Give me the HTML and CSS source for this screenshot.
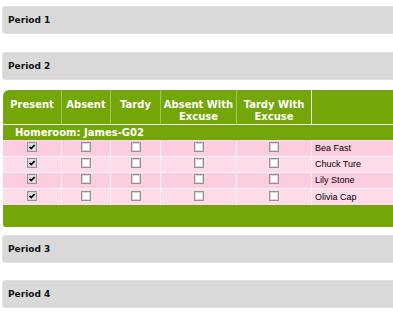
FILE: index.html
```html
<!DOCTYPE html>
<html lang="en">
<head>
  <meta charset="UTF-8">
  <meta name="viewport" content="width=device-width, initial-scale=1.0">
  <title>Attendance</title>
  <link rel="stylesheet" href="styles.css">
</head>
<body>

<div class="page">

  <div class="period period-1">Period 1</div>

  <div class="period period-2">Period 2</div>

  <!-- Open period: attendance grid -->
  <div class="grid-box">
    <table class="grid">
      <colgroup>
        <col class="c1"><col class="c2"><col class="c3"><col class="c4"><col class="c5"><col>
      </colgroup>
      <thead>
        <tr class="head-row">
          <th>Present</th>
          <th>Absent</th>
          <th>Tardy</th>
          <th>Absent With Excuse</th>
          <th class="last">Tardy With Excuse</th>
          <th class="names-head"></th>
        </tr>
      </thead>
      <tbody>
        <tr class="room-row">
          <td colspan="6">Homeroom: James-G02</td>
        </tr>
        <tr class="odd">
          <td><span class="box checked"><svg viewBox="0 0 8 8"><path d="M1.5 3.8 L3.3 5.6 L6.6 2"/></svg></span></td>
          <td><span class="box"></span></td>
          <td><span class="box"></span></td>
          <td><span class="box"></span></td>
          <td><span class="box"></span></td>
          <td class="name">Bea Fast</td>
        </tr>
        <tr class="even">
          <td><span class="box checked"><svg viewBox="0 0 8 8"><path d="M1.5 3.8 L3.3 5.6 L6.6 2"/></svg></span></td>
          <td><span class="box"></span></td>
          <td><span class="box"></span></td>
          <td><span class="box"></span></td>
          <td><span class="box"></span></td>
          <td class="name">Chuck Ture</td>
        </tr>
        <tr class="odd">
          <td><span class="box checked"><svg viewBox="0 0 8 8"><path d="M1.5 3.8 L3.3 5.6 L6.6 2"/></svg></span></td>
          <td><span class="box"></span></td>
          <td><span class="box"></span></td>
          <td><span class="box"></span></td>
          <td><span class="box"></span></td>
          <td class="name">Lily Stone</td>
        </tr>
        <tr class="even">
          <td><span class="box checked"><svg viewBox="0 0 8 8"><path d="M1.5 3.8 L3.3 5.6 L6.6 2"/></svg></span></td>
          <td><span class="box"></span></td>
          <td><span class="box"></span></td>
          <td><span class="box"></span></td>
          <td><span class="box"></span></td>
          <td class="name">Olivia Cap</td>
        </tr>
      </tbody>
    </table>
    <div class="grid-foot"></div>
  </div>

  <div class="period period-3">Period 3</div>

  <div class="period period-4">Period 4</div>

</div>

</body>
</html>
```

FILE: styles.css
```css
body {
  margin: 0;
  padding: 0;
  background-color: #fff;
  font-family: "DejaVu Sans", Verdana, sans-serif;
  overflow: hidden;
}
.page {
  width: 400px;
  padding: 6px 0 0 2px;
}
.period {
  box-sizing: border-box;
  height: 28px;
  line-height: 26px;
  padding-left: 5px;
  background-color: #d9d9d9;
  border: 1px solid #e2e2e2;
  border-radius: 3px;
  color: #111;
  font-size: 9px;
  font-weight: bold;
}
.period-2 {
  margin-top: 18px;
}
.period-3 {
  margin-top: 8px;
}
.period-4 {
  margin-top: 17px;
}
.grid-box {
  margin: 10px 0 0 1px;
  background-color: #74a509;
  border-radius: 6px 0 0 3px;
  overflow: hidden;
}
.grid {
  width: 100%;
  table-layout: fixed;
  border-collapse: separate;
  border-spacing: 0;
  font-size: 9px;
  line-height: 15px;
}
.grid .c1 { width: 59px; }
.grid .c2 { width: 49px; }
.grid .c3 { width: 50px; }
.grid .c4 { width: 76px; }
.grid .c5 { width: 75px; }
.grid th,
.grid td {
  padding: 0;
}
.head-row th {
  height: 25px;
  padding-top: 9px;
  vertical-align: top;
  color: #fff;
  font-size: 10px;
  font-weight: bold;
  line-height: 12px;
  text-align: center;
  border-right: 1px solid #a3c65c;
  border-bottom: 1px solid #f2f7e8;
}
.head-row th.last {
  border-right-color: #f4f8ec;
}
.head-row th.names-head {
  border-right: none;
}
.room-row td {
  height: 15px;
  padding-left: 12px;
  color: #fff;
  font-size: 10px;
  font-weight: bold;
  line-height: 15px;
  border-bottom: 1px solid #f7d8e6;
}
.odd td {
  background-color: #fcccdf;
}
.even td {
  background-color: #fddbe8;
}
.odd td,
.even td {
  height: 15px;
  text-align: center;
  vertical-align: middle;
  border-right: 1px solid #fff0f6;
  border-bottom: 1px solid #fff5f9;
}
.even:last-child td {
  border-bottom: none;
  height: 16px;
}
.grid td.name {
  text-align: left;
  padding-left: 3px;
  border-right: none;
  font-family: "Liberation Sans", Arial, sans-serif;
  font-size: 9px;
  color: #000;
}
.box {
  display: inline-block;
  box-sizing: border-box;
  width: 10px;
  height: 10px;
  vertical-align: -1px;
  background-color: #fff;
  border: 1px solid #939393;
  box-shadow: inset 0 0 0 1px #d6d6d6;
}
.box.checked {
  background-color: #e2e2e2;
}
.box svg {
  display: block;
  width: 8px;
  height: 8px;
}
.box svg path {
  fill: none;
  stroke: #000;
  stroke-width: 1.7;
}
.grid-foot {
  height: 22px;
}
```
